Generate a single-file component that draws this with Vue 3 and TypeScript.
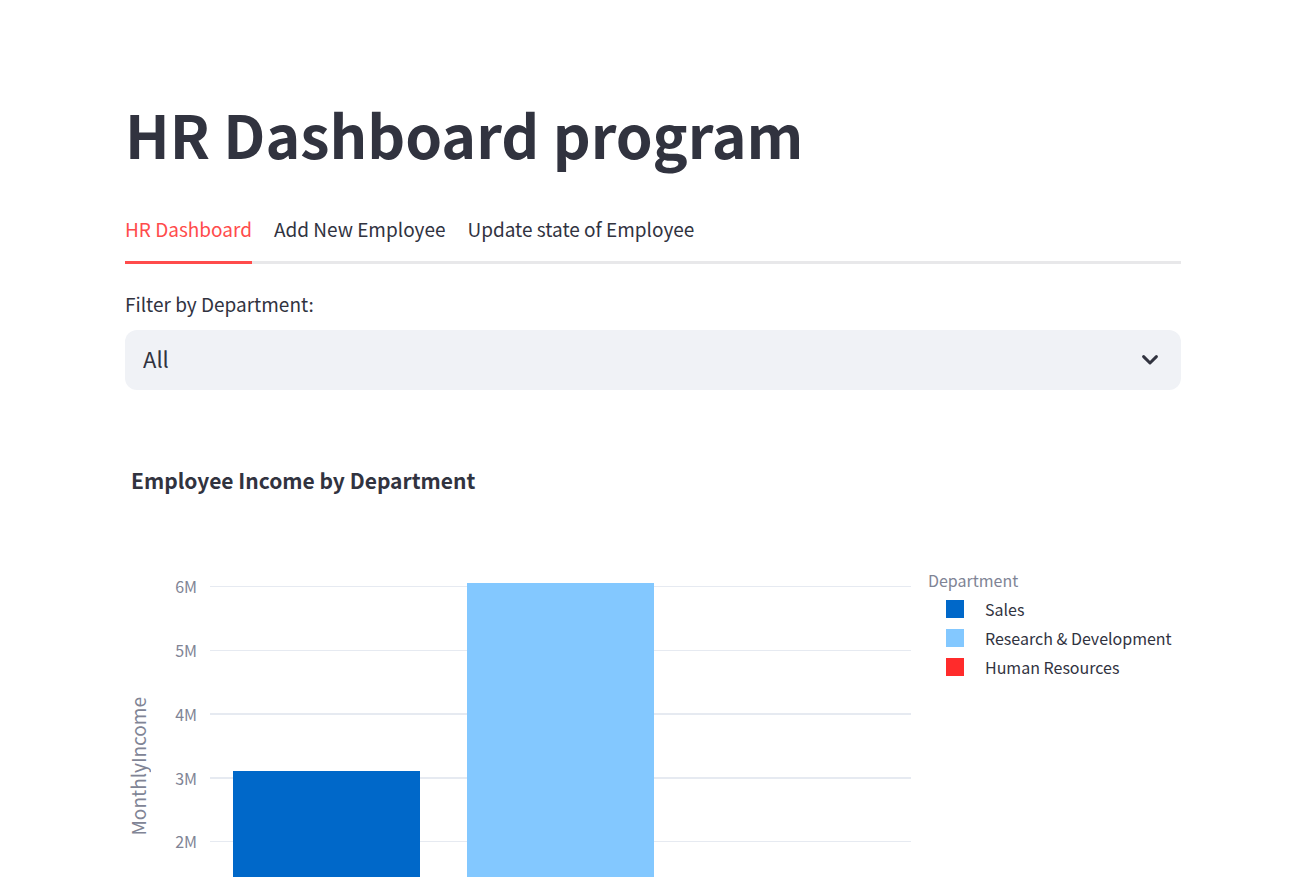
<script setup lang="ts">
import { ref } from 'vue'

interface DepartmentIncome {
  name: string
  income: number
  tone: string
}

const tabs: string[] = ['HR Dashboard', 'Add New Employee', 'Update state of Employee']
const activeTab = ref<string>(tabs[0])
const department = ref<string>('All')

const departments: DepartmentIncome[] = [
  { name: 'Sales', income: 3.1, tone: 'sales' },
  { name: 'Research & Development', income: 6.05, tone: 'research' },
  { name: 'Human Resources', income: 0.42, tone: 'human' },
]

// Top of the y axis, in millions.
const axisMax = 6.36
const ticks: number[] = [6, 5, 4, 3, 2, 1, 0]

const percent = (value: number): string => `${(value / axisMax) * 100}%`
const tickLabel = (value: number): string => (value === 0 ? '0' : `${value}M`)
</script>

<template>
  <main class="page">
    <h1 class="title">HR Dashboard program</h1>

    <div class="tabs" role="tablist">
      <button
        v-for="tab in tabs"
        :key="tab"
        class="tab"
        :class="{ active: tab === activeTab }"
        type="button"
        role="tab"
        :aria-selected="tab === activeTab"
        @click="activeTab = tab"
      >
        {{ tab }}
      </button>
    </div>

    <div class="field">
      <label class="label" for="department">Filter by Department:</label>
      <div class="select-box">
        <select id="department" v-model="department" class="select">
          <option>All</option>
          <option v-for="d in departments" :key="d.name">{{ d.name }}</option>
        </select>
        <svg class="chevron" viewBox="0 0 18 12" aria-hidden="true">
          <path d="M2.6 2.6 L9 9 L15.4 2.6" />
        </svg>
      </div>
    </div>

    <section class="chart">
      <h2 class="chart-title">Employee Income by Department</h2>
      <div class="chart-body">
        <div class="axis-title"><span>MonthlyIncome</span></div>
        <div class="axis">
          <span v-for="t in ticks" :key="t" class="tick" :style="{ bottom: percent(t) }">{{ tickLabel(t) }}</span>
        </div>
        <div class="plot">
          <div
            v-for="t in ticks"
            :key="t"
            class="grid-line"
            :class="{ thick: t === 4 || t === 3 }"
            :style="{ bottom: percent(t) }"
          ></div>
          <div v-for="d in departments" :key="d.name" class="slot">
            <div class="bar" :class="d.tone" :style="{ height: percent(d.income) }"></div>
          </div>
        </div>
        <div class="legend">
          <div class="legend-title">Department</div>
          <ul class="legend-list">
            <li v-for="d in departments" :key="d.name" class="legend-item">
              <span class="swatch" :class="d.tone"></span>
              <span>{{ d.name }}</span>
            </li>
          </ul>
        </div>
      </div>
    </section>
  </main>
</template>

<style>
body {
  margin: 0;
  background: #ffffff;
}
</style>

<style scoped>
.page {
  box-sizing: border-box;
  height: 100vh;
  overflow-y: auto;
  scrollbar-width: none;
  padding: 96px 113px 96px 125px;
  color: #31333f;
  font-family: 'Noto Sans CJK SC', 'Noto Sans', sans-serif;
  font-size: 19px;
}

.title {
  margin: 0 0 26px;
  font-size: 59px;
  line-height: 76px;
  font-weight: 700;
}

.tabs {
  display: flex;
  gap: 22px;
  box-shadow: inset 0 -3px #e8e8ea;
}

.tab {
  height: 66px;
  padding: 0 0 2px;
  border: 0;
  border-bottom: 3px solid transparent;
  background: none;
  color: inherit;
  font: inherit;
  white-space: nowrap;
  cursor: pointer;
}

.tab.active {
  color: #ff4b4b;
  border-bottom-color: #ff4b4b;
}

.field {
  margin-top: 24px;
}

.label {
  display: block;
  margin-bottom: 10px;
  line-height: 32px;
}

.select-box {
  position: relative;
}

.select {
  display: block;
  width: 100%;
  height: 60px;
  padding: 0 56px 4px 18px;
  border: 0;
  border-radius: 12px;
  appearance: none;
  background: #f0f2f6;
  color: inherit;
  font-family: inherit;
  font-size: 22px;
}

.chevron {
  position: absolute;
  top: 24px;
  right: 22px;
  width: 18px;
  height: 12px;
  fill: none;
  stroke: #31333f;
  stroke-width: 3;
  stroke-linecap: round;
  stroke-linejoin: round;
  pointer-events: none;
}

.chart {
  margin-top: 74px;
}

.chart-title {
  margin: 0 0 67px 6px;
  font-size: 21px;
  line-height: 32px;
  font-weight: 700;
}

.chart-body {
  display: grid;
  grid-template-columns: 26px 46px 1fr 253px;
  height: 406px;
}

.axis-title {
  display: flex;
  align-items: center;
  justify-content: center;
  color: #808495;
}

.axis-title span {
  writing-mode: vertical-rl;
  transform: rotate(180deg);
  line-height: 28px;
}

.axis {
  position: relative;
  color: #808495;
  font-size: 16px;
  line-height: 24px;
}

.tick {
  position: absolute;
  right: 0;
  margin-bottom: -12px;
}

.plot {
  position: relative;
  display: flex;
  margin: 0 17px 0 13px;
}

.grid-line {
  position: absolute;
  left: 0;
  right: 0;
  height: 1px;
  margin-bottom: -1px;
  background: #e6eaf1;
}

.grid-line.thick {
  height: 2px;
}

.slot {
  position: relative;
  flex: 1;
  display: flex;
  align-items: flex-end;
  justify-content: center;
}

.bar {
  width: 80%;
}

.legend {
  padding-top: 3px;
  font-size: 16px;
  line-height: 29px;
  white-space: nowrap;
}

.legend-title {
  color: #808495;
}

.legend-list {
  margin: 0;
  padding: 0 0 0 18px;
  list-style: none;
}

.legend-item {
  display: flex;
  align-items: center;
  gap: 21px;
}

.swatch {
  width: 18px;
  height: 18px;
  margin-bottom: 2px;
}

.sales {
  background: #0068c9;
}

.research {
  background: #83c8ff;
}

.human {
  background: #ff2b2b;
}
</style>
